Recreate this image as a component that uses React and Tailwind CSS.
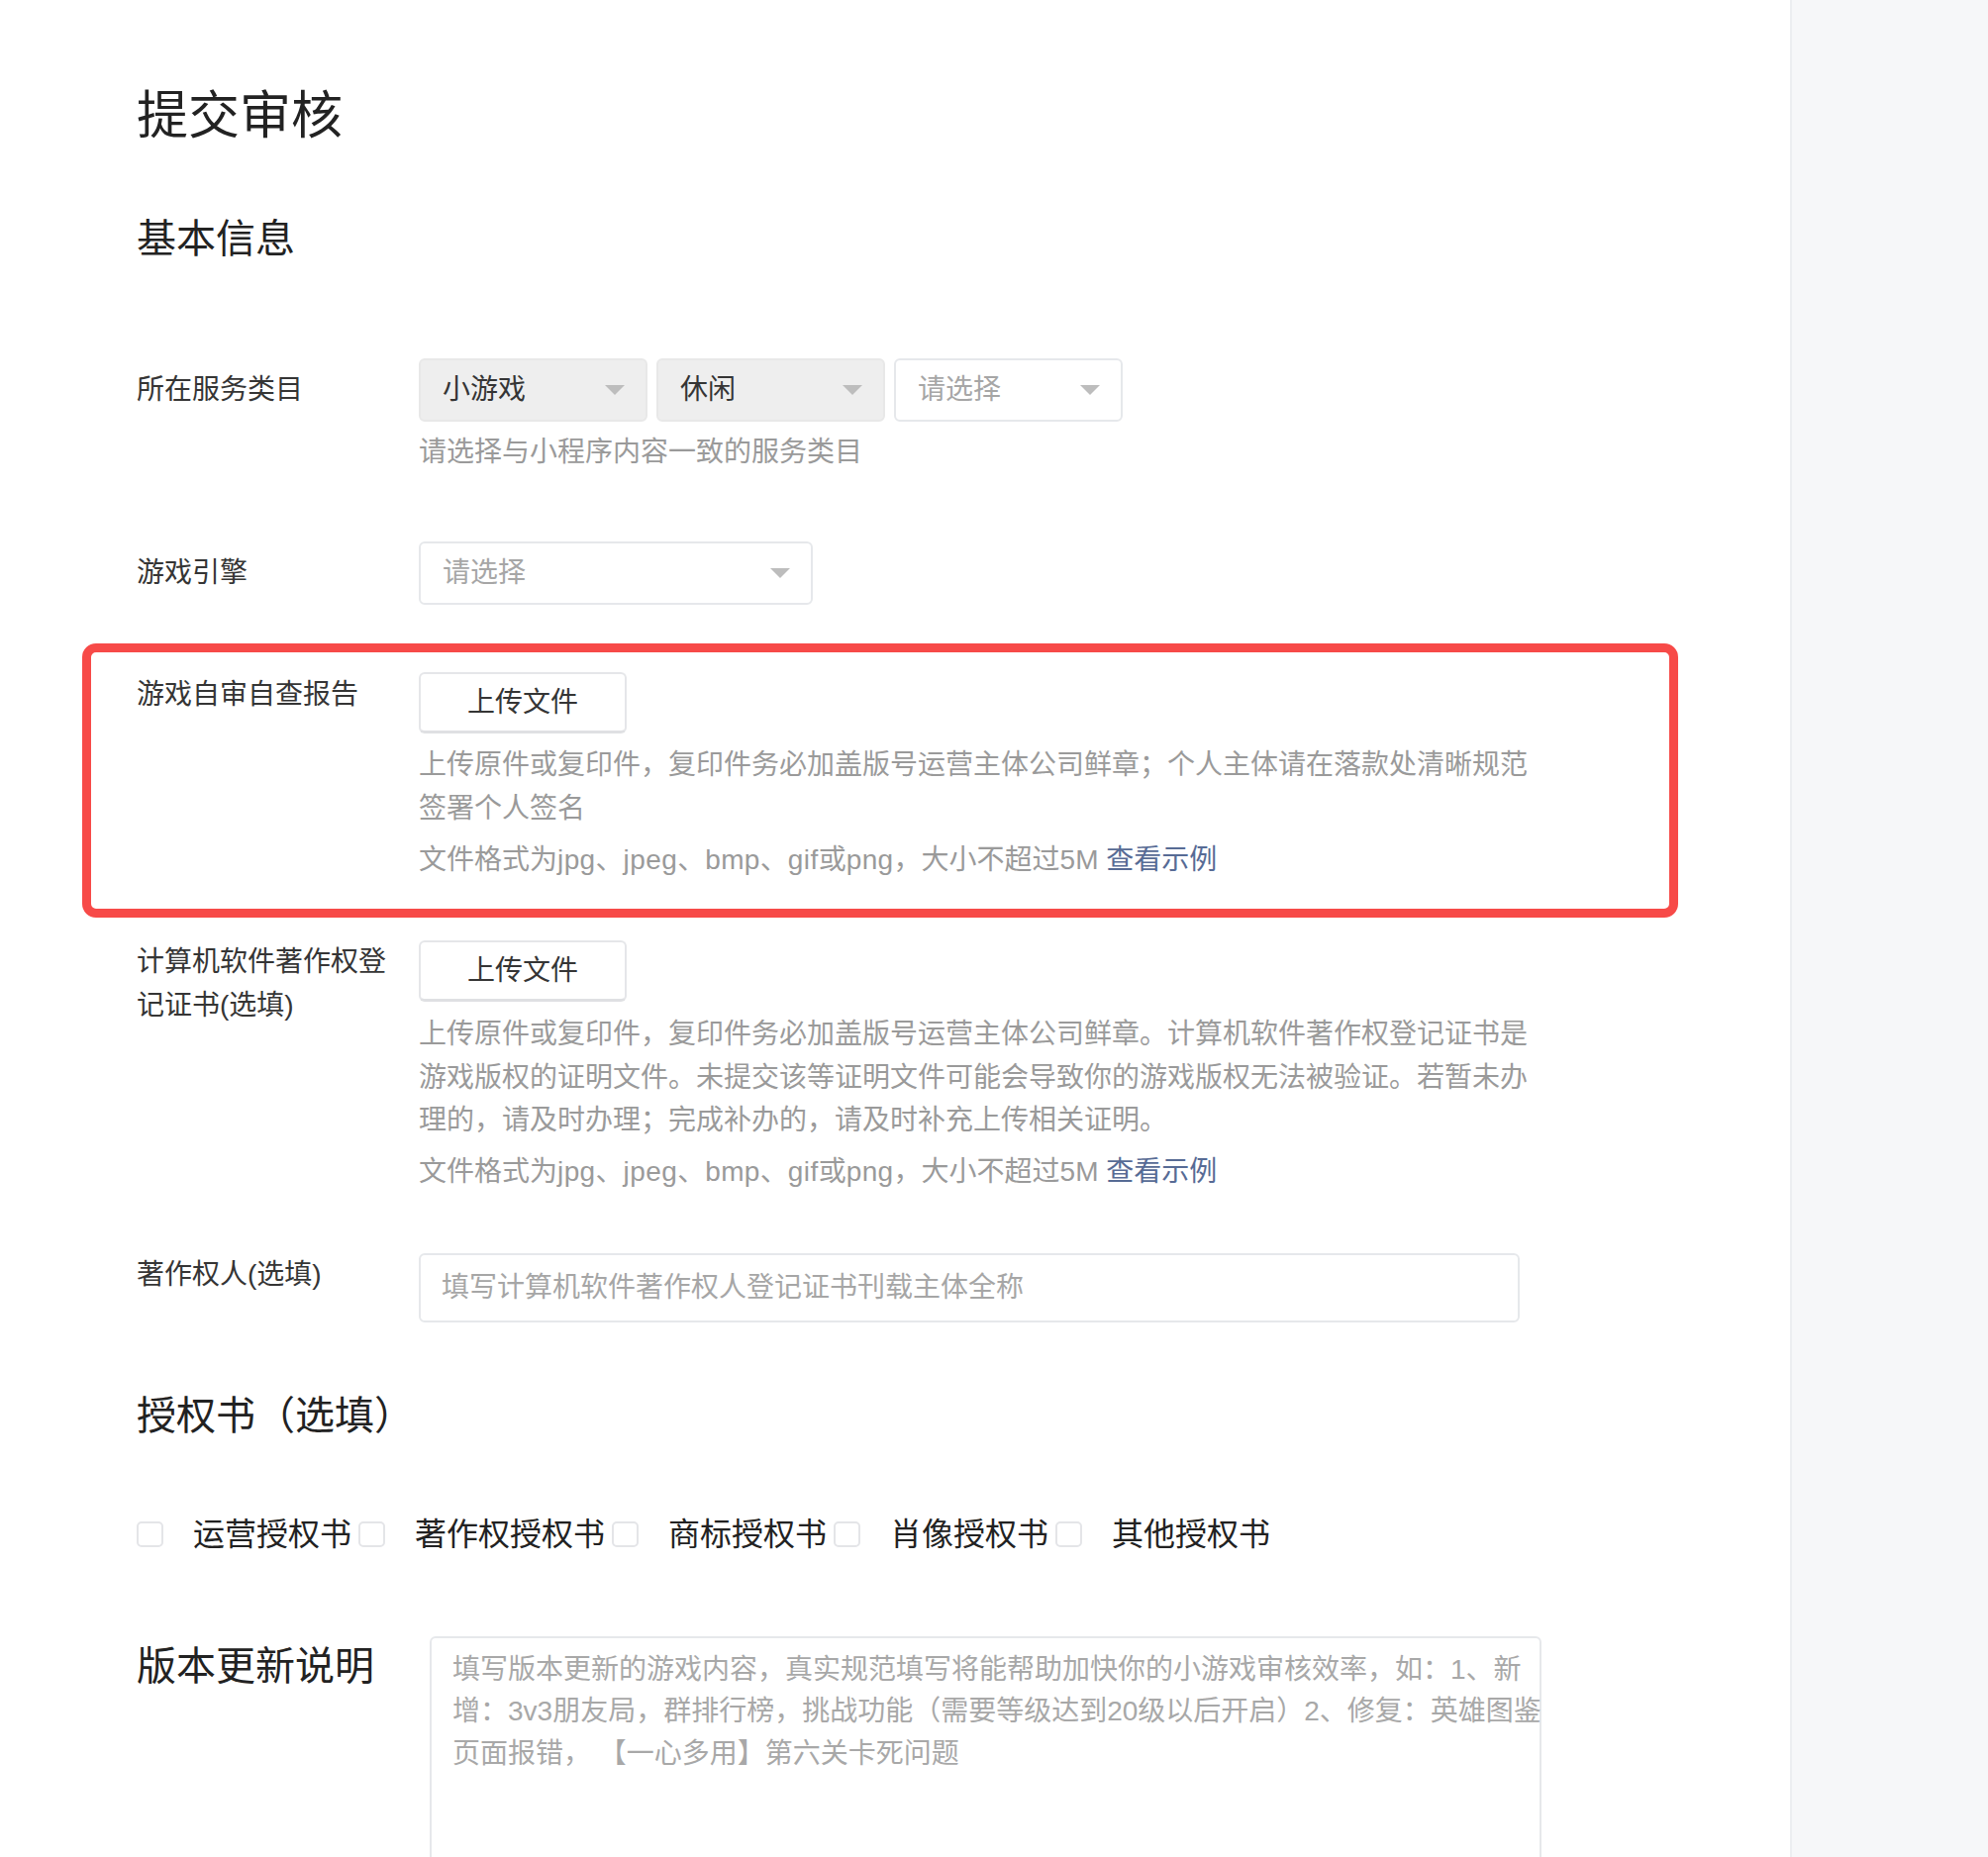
import React from 'react';

const FONT = "font-['Liberation_Sans','Noto_Sans_CJK_SC',sans-serif]";

const Arrow = () => (
    <span className="w-0 h-0 border-l-[10px] border-r-[10px] border-t-[10px] border-l-transparent border-r-transparent border-t-[#bdbdbd]" />
);

const Select = ({ value, placeholder, filled, width = 'w-[231px]' }) => (
    <div
        className={`${width} h-[64px] flex items-center justify-between pl-[22px] pr-[21px] rounded-[6px] border-2 ${filled ? 'bg-[#eeeeee] border-[#e8e8e8]' : 'bg-white border-[#e6e8eb]'
            }`}
    >
        <span className={`text-[28px] ${value ? 'text-[#353535]' : 'text-[#a6a6a6]'}`}>{value || placeholder}</span>
        <Arrow />
    </div>
);

const UploadButton = () => (
    <button className="w-[210px] h-[62px] bg-white border-2 border-[#e5e6e9] border-b-[3px] border-b-[#dfe0e3] rounded-[6px] text-[28px] text-[#353535]">
        上传文件
    </button>
);

const Label = ({ children, className = '' }) => (
    <div className={`w-[285px] shrink-0 pr-[25px] text-[28px] text-[#353535] ${className}`}>{children}</div>
);

const FormatLine = () => (
    <p className="mt-[8px] text-[28px] leading-[44px] text-[#9a9a9a]">
        文件格式为<span className="tracking-[0.4px]">jpg</span>、<span className="tracking-[0.4px]">jpeg</span>、<span className="tracking-[0.4px]">bmp</span>、<span className="tracking-[0.4px]">gif</span>或<span className="tracking-[0.4px]">png</span>，大小不超过5M <span className="text-[#576b95]">查看示例</span>
    </p>
);

const licenses = ['运营授权书', '著作权授权书', '商标授权书', '肖像授权书', '其他授权书'];

export default function App() {
    return (
        <div className={`flex h-[1876px] overflow-hidden bg-white ${FONT}`}>
            <main className="flex-1 pl-[138px] pt-[81px]">
                <h1 className="text-[52px] leading-[72px] text-[#222]">提交审核</h1>
                <h2 className="mt-[60px] text-[40px] leading-[56px] text-[#222]">基本信息</h2>

                {/* 服务类目 */}
                <div className="mt-[93px] flex">
                    <Label className="leading-[64px]">所在服务类目</Label>
                    <div>
                        <div className="flex gap-[9px]">
                            <Select value="小游戏" filled />
                            <Select value="休闲" filled />
                            <Select placeholder="请选择" />
                        </div>
                        <p className="mt-[9px] text-[28px] leading-[44px] text-[#9a9a9a]">请选择与小程序内容一致的服务类目</p>
                    </div>
                </div>

                <div className="mt-[68px] flex">
                    <Label className="leading-[64px]">游戏引擎</Label>
                    <Select placeholder="请选择" width="w-[398px]" />
                </div>

                {/* highlighted row */}
                <div className="mt-[39px] -ml-[55px] w-[1612px] border-[9px] border-[#f74a48] rounded-[14px] pl-[46px] pt-[20px] pb-[27px]">
                    <div className="flex">
                        <Label className="leading-[44px] pt-[1px]">游戏自审自查报告</Label>
                        <div>
                            <UploadButton />
                            <p className="mt-[10px] w-[1130px] text-[28px] leading-[44px] text-[#9a9a9a]">
                                上传原件或复印件，复印件务必加盖版号运营主体公司鲜章；个人主体请在落款处清晰规范签署个人签名
                            </p>
                            <FormatLine />
                        </div>
                    </div>
                </div>

                <div className="mt-[23px] flex">
                    <Label className="leading-[44px]">计算机软件著作权登记证书(选填)</Label>
                    <div>
                        <UploadButton />
                        <p className="mt-[11px] w-[1130px] text-[28px] leading-[43.5px] text-[#9a9a9a]">
                            上传原件或复印件，复印件务必加盖版号运营主体公司鲜章。计算机软件著作权登记证书是游戏版权的证明文件。未提交该等证明文件可能会导致你的游戏版权无法被验证。若暂未办理的，请及时办理；完成补办的，请及时补充上传相关证明。
                        </p>
                        <FormatLine />
                    </div>
                </div>

                <div className="mt-[60px] flex">
                    <Label className="leading-[44px]">著作权人(选填)</Label>
                    <div className="w-[1112px] h-[70px] flex items-center px-[21px] border-2 border-[#e6e8eb] rounded-[6px] text-[28px] text-[#a6a6a6]">
                        填写计算机软件著作权人登记证书刊载主体全称
                    </div>
                </div>

                <h3 className="mt-[66px] text-[40px] leading-[56px] text-[#222]">授权书（选填）</h3>

                <div className="mt-[70px] flex items-center">
                    {licenses.map((name) => (
                        <label key={name} className="flex items-center">
                            <span className="w-[27px] h-[26px] border-2 border-[#e4e5e8] rounded-[5px] bg-white" />
                            <span className="ml-[30px] mr-[7px] text-[32px] leading-[44px] text-[#222]">{name}</span>
                        </label>
                    ))}
                </div>

                <div className="mt-[81px] flex">
                    <div className="w-[296px] shrink-0 text-[40px] leading-[60px] text-[#222]">版本更新说明</div>
                    <div className="w-[1123px] h-[320px] border-2 border-[#e6e8eb] rounded-[6px] pl-[21px] pt-[11px] text-[28px] leading-[42.5px] text-[#a8a8a8] whitespace-nowrap">
                        <div>填写版本更新的游戏内容，真实规范填写将能帮助加快你的小游戏审核效率，如：1、新</div>
                        <div>增：3v3朋友局，群排行榜，挑战功能（需要等级达到20级以后开启）2、修复：英雄图鉴</div>
                        <div>页面报错， 【一心多用】第六关卡死问题</div>
                    </div>
                </div>
            </main>
            <aside className="w-[200px] shrink-0 bg-[#f6f7f9] border-l-2 border-[#eceef1]" />
        </div>
    );
}
